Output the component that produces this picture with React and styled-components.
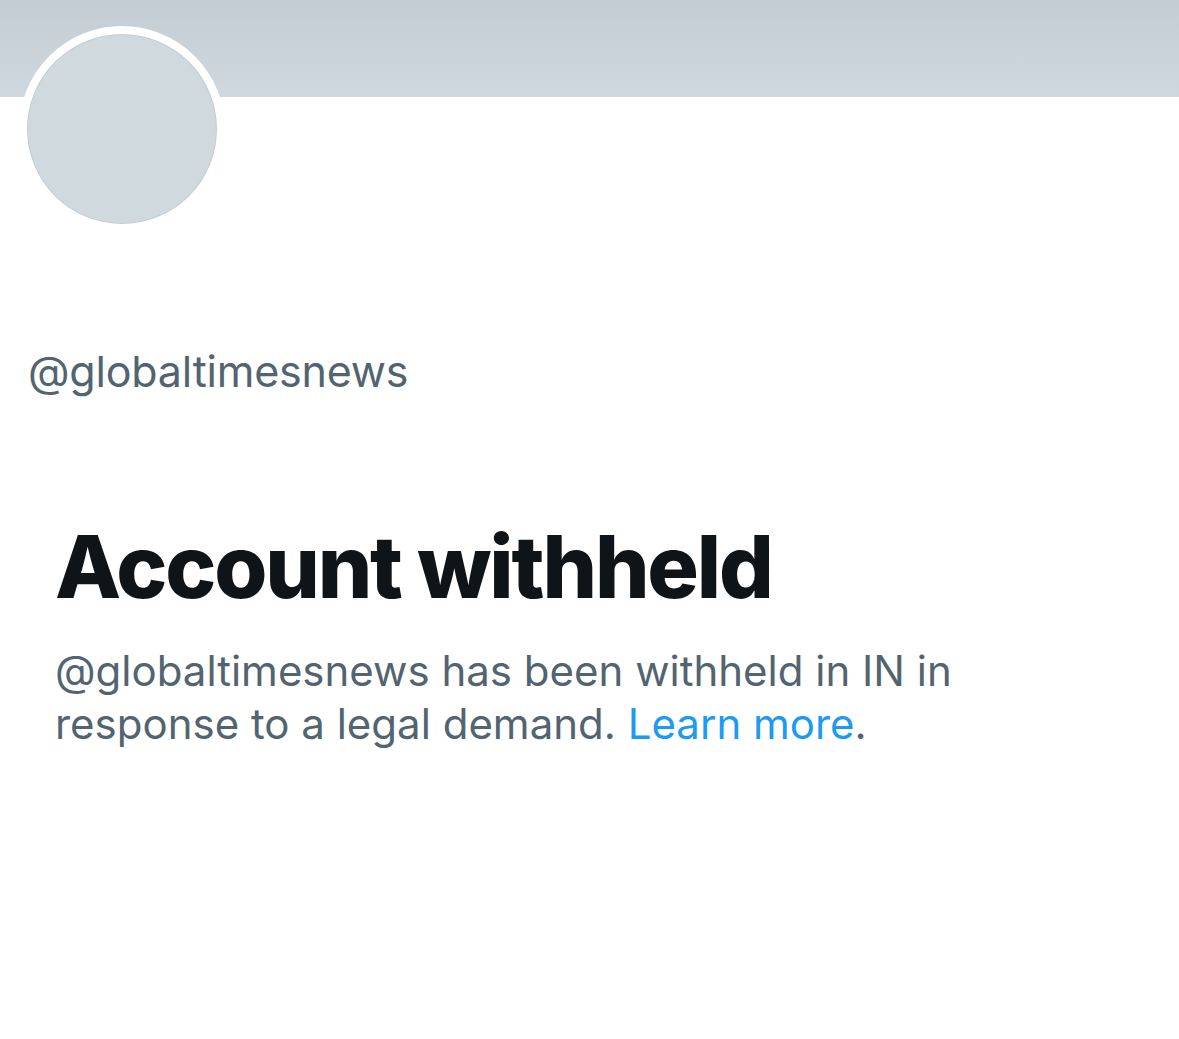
import React from 'react';
import styled, { createGlobalStyle } from 'styled-components';

const Global = createGlobalStyle`
  html, body {
    margin: 0;
    padding: 0;
    background: #ffffff;
  }
  body {
    font-family: Inter, "Noto Sans", "Liberation Sans", sans-serif;
  }
`;

const Page = styled.div`
  width: 1179px;
  height: 1039px;
  overflow: hidden;
  background: #fff;
`;

const Banner = styled.div`
  height: 97px;
  background: linear-gradient(180deg, #c5cdd4 0%, #cfd8de 100%);
`;

const Head = styled.div`
  padding: 0 0 0 19px;
  height: 128px;
`;

const Avatar = styled.div`
  width: 190px;
  height: 190px;
  margin-top: -71px;
  border-radius: 50%;
  border: 8px solid #fff;
  background: #cfd9de;
  box-shadow: inset 0 0 0 1px #c3ccd2;
`;

const Handle = styled.div`
  margin: 191px 0 0 28px;
  font-size: 43px;
  color: #536471;
  letter-spacing: -0.2px;
`;

const Notice = styled.section`
  padding: 127px 0 0 55px;
`;

const Title = styled.h1`
  margin: 0;
  font-size: 86px;
  font-weight: 800;
  color: #0f1419;
  letter-spacing: -2.2px;
  line-height: 1;
`;

const Body = styled.p`
  margin: 34px 0 0 0;
  width: 960px;
  font-size: 42px;
  line-height: 53px;
  color: #536471;
`;

const Link = styled.a`
  color: #1d9bf0;
  text-decoration: none;
`;

export default function App() {
  return (
    <Page>
      <Global />
      <Banner />
      <Head>
        <Avatar />
      </Head>
      <Handle>@globaltimesnews</Handle>
      <Notice>
        <Title>Account withheld</Title>
        <Body>
          @globaltimesnews has been withheld in IN in response to a legal demand.{' '}
          <Link href="#">Learn more</Link>.
        </Body>
      </Notice>
    </Page>
  );
}
